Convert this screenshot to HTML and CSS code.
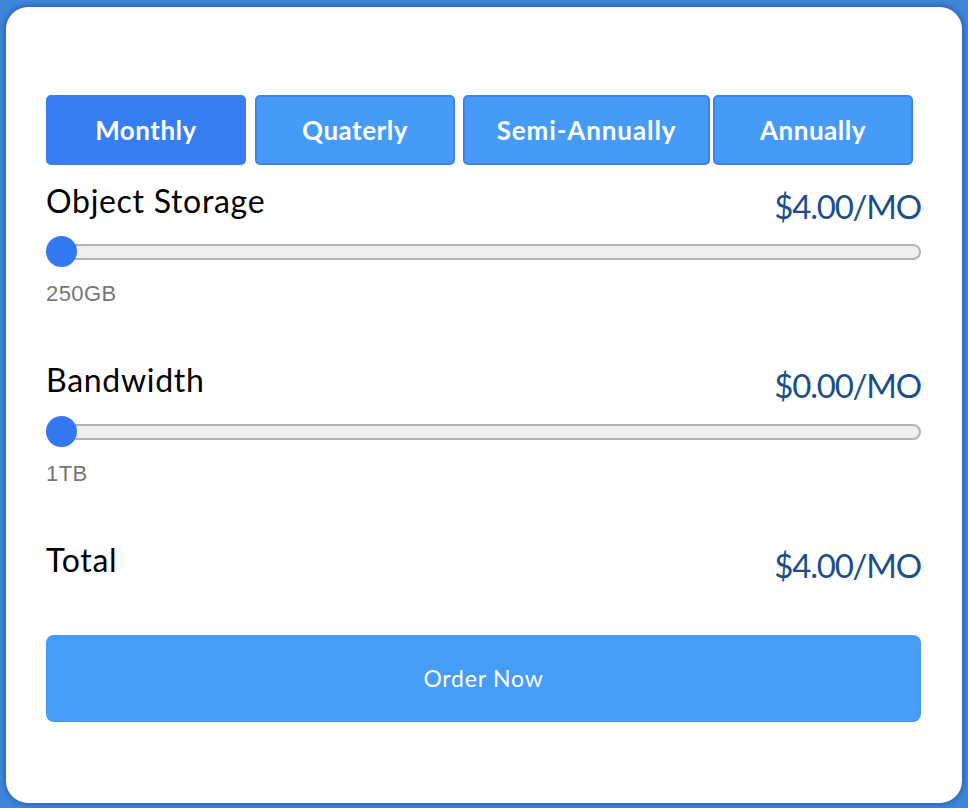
FILE: index.html
```html
<!DOCTYPE html>
<html lang="en">
<head>
<meta charset="utf-8">
<title>Object Storage Pricing</title>
<link rel="stylesheet" href="styles.css">
</head>
<body>
<div class="card">
  <div class="tabs">
    <button class="tab tab-active tab-monthly">Monthly</button>
    <button class="tab tab-quarterly">Quaterly</button>
    <button class="tab tab-semi">Semi-Annually</button>
    <button class="tab tab-annual">Annually</button>
  </div>

  <div class="section section-first">
    <div class="row-head">
      <span class="label">Object Storage</span>
      <span class="price">$4.00/MO</span>
    </div>
    <div class="slider">
      <div class="track"></div>
      <div class="thumb"></div>
    </div>
    <div class="value">250GB</div>
  </div>

  <div class="section">
    <div class="row-head">
      <span class="label">Bandwidth</span>
      <span class="price">$0.00/MO</span>
    </div>
    <div class="slider slider-second">
      <div class="track"></div>
      <div class="thumb"></div>
    </div>
    <div class="value">1TB</div>
  </div>

  <div class="section">
    <div class="row-head">
      <span class="label">Total</span>
      <span class="price">$4.00/MO</span>
    </div>
  </div>

  <button class="order">Order Now</button>
</div>
</body>
</html>
```

FILE: styles.css
```css
html, body {
  margin: 0;
  padding: 0;
}

body {
  background: #3f87db;
  width: 968px;
  height: 808px;
  overflow: hidden;
  font-family: Lato, "Open Sans", sans-serif;
}

.card {
  box-sizing: border-box;
  width: 956px;
  height: 796px;
  margin: 7px 6px 5px 6px;
  background: #ffffff;
  border-radius: 22px;
  box-shadow: 0 0 6px 2px rgba(25, 70, 150, 0.55);
  padding: 88px 41px 0 40px;
}

.tabs {
  display: flex;
  height: 70px;
}

.tab {
  box-sizing: border-box;
  height: 70px;
  width: 200px;
  border: 2px solid #3b82f0;
  border-radius: 5px;
  background: #469bf7;
  color: #ffffff;
  font-family: Lato, "Open Sans", sans-serif;
  font-weight: 700;
  font-size: 26px;
  letter-spacing: 0.5px;
  line-height: 66px;
  padding: 0;
  text-align: center;
}

.tab-active {
  background: #377ef4;
  border-color: #377ef4;
}

.tab-quarterly { margin-left: 9px; }
.tab-semi { margin-left: 8px; width: 247px; letter-spacing: 0.9px; }
.tab-annual { margin-left: 3px; }

.section {
  margin-top: 53px;
}

.section-first {
  margin-top: 16px;
}

.row-head {
  display: flex;
  justify-content: space-between;
  align-items: flex-start;
  height: 44px;
}

.label {
  font-size: 32px;
  line-height: 40px;
  letter-spacing: 0.7px;
  color: #000000;
}

.price {
  font-size: 33px;
  line-height: 40px;
  margin-top: 5px;
  letter-spacing: -1.2px;
  color: #1c4f89;
}

.slider {
  position: relative;
  display: flex;
  align-items: center;
  margin-top: 11px;
  height: 31px;
}

.slider-second {
  margin-top: 12px;
}

.track {
  box-sizing: border-box;
  flex: 1;
  height: 16px;
  background: #efefef;
  border: 2px solid #b3b3b3;
  border-radius: 8px;
}

.thumb {
  position: absolute;
  left: 0;
  top: 0;
  width: 31px;
  height: 31px;
  border-radius: 50%;
  background: #3479f4;
}

.value {
  margin-top: 14px;
  font-family: "Liberation Sans", Arial, sans-serif;
  font-size: 22px;
  letter-spacing: 0.4px;
  line-height: 26px;
  color: #777777;
}

.order {
  display: block;
  box-sizing: border-box;
  width: 100%;
  height: 87px;
  margin-top: 51px;
  border: none;
  border-radius: 8px;
  background: #469cf6;
  color: #ffffff;
  font-family: Lato, "Open Sans", sans-serif;
  font-size: 23px;
  letter-spacing: 0.8px;
  line-height: 87px;
  padding: 0;
  text-align: center;
}
```
